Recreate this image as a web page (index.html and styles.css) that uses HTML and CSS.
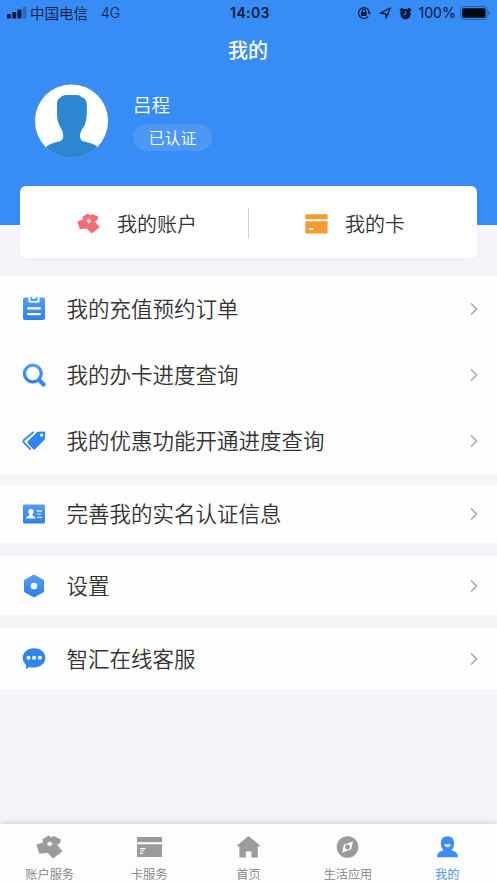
FILE: index.html
```html
<!DOCTYPE html>
<html lang="zh-CN">
<head>
<meta charset="utf-8">
<meta name="viewport" content="width=device-width, initial-scale=1">
<title>我的</title>
<link rel="stylesheet" href="styles.css">
</head>
<body>
<svg class="defs" width="0" height="0" aria-hidden="true">
  <defs>
    <linearGradient id="blue" x1="0" y1="0" x2="0" y2="1"><stop offset="0" stop-color="#559df2"/><stop offset="1" stop-color="#2f80ec"/></linearGradient>
    <symbol id="chevron" viewBox="0 0 8 14"><path d="M1 1.3 6.7 7 1 12.7" fill="none" stroke="#999" stroke-width="1.2"/></symbol>
    <symbol id="blocks" viewBox="0 0 27 24"><path fill="currentColor" fill-rule="evenodd" d="M.4 9.6 7 7.4 6.4 4.2 12.8.5 15.3 2.6 18 1 25 4.4 23.8 8.2 21 9.8 26.6 16.2 17 23.5 11.6 17.8 3.3 18.7ZM13.7 6.2 10.8 8.7 13.7 11.6 16.7 9Z"/></symbol>
  </defs>
</svg>
<div class="app">
  <header class="hero">
    <div class="status">
      <div class="status-left">
        <svg width="20" height="12" viewBox="0 0 20 12"><g fill="#071a3c"><rect y="7" width="4" height="4.6" rx="1"/><rect x="5.3" y="5" width="4" height="6.6" rx="1"/><rect x="10.5" y="2.6" width="4" height="9" rx="1"/></g><rect x="15.7" y="0" width="3.8" height="11.6" rx="1" fill="#2a68bd"/></svg>
        <span class="carrier">中国电信</span><span class="network">4G</span>
      </div>
      <div class="time">14:03</div>
      <div class="status-right">
        <svg width="14" height="14" viewBox="0 0 14 14" fill="none" stroke="#071a3c" stroke-width="1.2"><path d="M11.2 10.4A5.4 5.4 0 1 1 12.3 6.4"/><path d="M10.5 6.2h3.4L12.2 8.7Z" fill="#071a3c" stroke="none"/><path d="M5.2 6.5V5a1.7 1.7 0 0 1 3.4 0v1.5"/><rect x="4.1" y="6.1" width="5.5" height="3.8" rx=".5" fill="#071a3c" stroke="none"/></svg>
        <svg class="locate" width="13" height="12" viewBox="0 0 13 12"><path d="M1.4 6.2 11.4 1 7.1 11 6.6 6.6Z" fill="none" stroke="#071a3c" stroke-width="1.4" stroke-linejoin="round"/></svg>
        <svg class="alarm" width="13" height="13" viewBox="0 0 13 13"><circle cx="6.5" cy="7" r="5.2" fill="#071a3c"/><path d="M1 3.8 3.8 1.2M12 3.8 9.2 1.2" stroke="#071a3c" stroke-width="2"/><path d="M6.7 4v3.4H4.3" fill="none" stroke="#388cf6"/></svg>
        <span class="percent">100%</span>
        <svg width="31" height="14" viewBox="0 0 31 14"><rect x=".6" y=".6" width="26.5" height="12.8" rx="3" fill="none" stroke="#215ba9"/><rect x="2.2" y="2.2" width="23.3" height="9.6" rx="1.5" fill="#020814"/><path d="M28.5 4.8c1.8.8 1.8 3.6 0 4.4Z" fill="#215ba9"/></svg>
      </div>
    </div>
    <h1 class="title">我的</h1>
    <div class="profile">
      <svg class="avatar" width="75" height="76" viewBox="0 0 75 76"><defs><clipPath id="face"><circle cx="37.5" cy="38" r="36.8"/></clipPath></defs><circle cx="37.5" cy="38" r="37" fill="#fff" stroke="#3a81cc" stroke-width=".8"/><path clip-path="url(#face)" fill="#2e86d1" d="M26 15Q28 12.2 33 12H43Q46 12 47.5 14Q52.5 15.5 52.8 21V30Q52.6 38 50.5 42.5Q46.5 48 46 52Q45.8 57 49 58.3C56 60 60 60.5 64 64.5L66 77H9L12 64Q17 60 26 58.3Q29.5 57 29.2 52Q29 48 25.8 43Q23 38 23 31V21Q23 16 26 15Z"/></svg>
      <div class="identity"><div class="name">吕程</div><div class="badge">已认证</div></div>
    </div>
  </header>
  <section class="card">
    <div class="card-item">
      <svg class="red" width="23" height="21" viewBox="0 0 27 24" preserveAspectRatio="none"><use href="#blocks"/></svg><span>我的账户</span>
    </div>
    <div class="divider"></div>
    <div class="card-item">
      <svg width="23" height="20" viewBox="0 0 23 20"><path fill="#f79a32" fill-rule="evenodd" d="M1.5.3h20Q22.6.3 22.6 1.4V5.2H.4V1.4Q.4.3 1.5.3ZM.4 7.2H22.6V18Q22.6 19.6 21 19.6H2Q.4 19.6.4 18ZM4 14V16H8.3V14Z"/></svg><span>我的卡</span>
    </div>
  </section>
  <main>
    <section class="group first">
      <div class="row"><svg class="icon" width="24" height="24" viewBox="0 0 24 24"><path fill="url(#blue)" d="M3 .5H6.5V5.6H17.5V.5H21Q23 .5 23 2.5V21Q23 23 21 23H3Q1 23 1 21V2.5Q1 .5 3 .5Z"/><path fill="#559df2" d="M8.4 0H10.2V1.8H13.8V0H15.6V4H8.4Z"/><path d="M6.2 11.4H17.8M6.2 17.2H17.8" stroke="#fff" stroke-width="2.3" stroke-linecap="round"/></svg><span>我的充值预约订单</span><svg class="chev"><use href="#chevron"/></svg></div>
      <div class="row"><svg class="icon" width="24" height="24" viewBox="0 0 24 24"><circle cx="10.8" cy="10.5" r="8.4" fill="none" stroke="url(#blue)" stroke-width="3.3"/><path d="m17.4 17.2 4.2 4.2" stroke="#3986ea" stroke-width="4.2" stroke-linecap="round"/></svg><span>我的办卡进度查询</span><svg class="chev"><use href="#chevron"/></svg></div>
      <div class="row"><svg class="icon" width="24" height="24" viewBox="0 0 24 24"><path fill="#2f84ef" fill-rule="evenodd" d="M15.4 2.8 22 2.5Q23.4 2.4 23.3 4L22.8 10.5 13.2 20Q12.1 21 11 20L6 14.8Q4.7 13.4 6 12ZM19.6 4.4a1.65 1.65 0 1 0 .01 0Z"/><path d="M11.6 2.9 2 11Q.8 12.2 1.8 13.4L8.7 20.6" fill="none" stroke="#3b8bed" stroke-width="1.9"/></svg><span>我的优惠功能开通进度查询</span><svg class="chev"><use href="#chevron"/></svg></div>
    </section>
    <section class="group verify"><div class="row"><svg class="icon" width="24" height="24" viewBox="0 0 24 24"><rect x="1" y="2.5" width="22" height="19" rx="1.6" fill="url(#blue)"/><path fill="#fff" d="M4 16.5Q4 14.7 7.2 13.3L7.6 12.4Q5.9 10.5 6.3 8.8Q6.8 7 8.9 7Q11.1 7 11.6 8.8Q11.9 10.8 10.3 12.4L10.8 13.4Q13.5 14.7 13.5 16.5Z"/><path d="M14.5 9H19.8M15.2 12.1H18.8M14.8 15.4H20.2" stroke="#d8ebff" stroke-width="1.4"/></svg><span>完善我的实名认证信息</span><svg class="chev"><use href="#chevron"/></svg></div></section>
    <section class="group settings"><div class="row"><svg class="icon" width="24" height="24" viewBox="0 0 24 24"><path fill="url(#blue)" stroke="url(#blue)" stroke-width="2" stroke-linejoin="round" d="M12 1.7 21 6.6V17.4L12 22.3 3 17.4V6.6Z"/><circle cx="12" cy="12" r="3.3" fill="#fff"/></svg><span>设置</span><svg class="chev"><use href="#chevron"/></svg></div></section>
    <section class="group service"><div class="row"><svg class="icon" width="24" height="24" viewBox="0 0 24 24"><path fill="#2f87ee" d="M12 1.2C18.8 1.2 23.4 5.4 23.4 10.8S18.8 20.4 12 20.4Q9.5 20.4 7.4 19.9L4.1 21.9 4 17.9Q.7 15.1.7 10.8C.7 5.4 5.4 1.2 12 1.2Z"/><g fill="#fff"><circle cx="6.5" cy="10.8" r="2"/><circle cx="12.1" cy="10.8" r="2"/><circle cx="17.9" cy="10.8" r="2"/></g></svg><span>智汇在线客服</span><svg class="chev"><use href="#chevron"/></svg></div></section>
  </main>
  <nav class="tabs">
    <div class="tab"><svg width="27" height="24"><use href="#blocks"/></svg><span>账户服务</span></div>
    <div class="tab"><svg width="27" height="24" viewBox="0 0 27 24"><path fill="currentColor" fill-rule="evenodd" d="M1 2H26V7.3H1ZM1 9.2H26V22H1ZM4 13V14.2H9.4V13ZM4 15.4V16.4H8.2V15.4ZM4 17.7V18.9H7V17.7Z"/></svg><span>卡服务</span></div>
    <div class="tab"><svg width="27" height="24" viewBox="0 0 27 24"><path fill="currentColor" d="M13.5 1 26 11.2H22.8V22.5H16.4V16.5H10.8V22.5H4.4V11.2H1.2Z"/></svg><span>首页</span></div>
    <div class="tab"><svg width="27" height="24" viewBox="0 0 27 24"><circle cx="13.5" cy="12" r="10.8" fill="currentColor"/><path fill="#fff" fill-rule="evenodd" d="M18.9 6.6 17.2 14.2 8.1 17.4 9.9 9.8ZM13.5 9.5a2.5 2.5 0 1 0 .01 0Z"/></svg><span>生活应用</span></div>
    <div class="tab active"><svg width="27" height="24" viewBox="0 0 27 24"><path fill="currentColor" d="M3.2 22.3V20Q3.8 17 9.3 15.2Q6.7 12.3 6.7 8.2Q6.9 1.2 13.5 1.2T20.2 8.2Q20.2 12.3 17.6 15.2Q23 17 23.7 20V22.3Z"/><path fill="#fff" d="M10.3 9.2H16.8Q16.2 12 13.6 12T10.3 9.2Z"/></svg><span>我的</span></div>
  </nav>
</div>
</body>
</html>
```
FILE: styles.css
```css
* { box-sizing: border-box; }
body { margin: 0; font-family: "Noto Sans CJK SC", sans-serif; font-weight: 350; color: #333; }
svg { display: block; flex: none; }
.defs { position: absolute; }
.app { height: 883px; display: flex; flex-direction: column; background: #f4f4f9; overflow: hidden; }
.hero { flex: none; height: 225px; background: #388cf6; }
.status { height: 26px; display: grid; grid-template-columns: 1fr auto 1fr; align-items: center; padding: 0 6px 0 9px; color: #071a3c; font-size: 14.5px; line-height: 26px; }
.status-left, .status-right { display: flex; align-items: center; }
.status-left { margin-left: -2px; }
.status-right { justify-content: flex-end; }
.carrier { margin-left: 3px; }
.network { margin-left: 13px; font-family: Inter, sans-serif; font-size: 14px; }
.time { font: 600 14px/26px Inter, sans-serif; letter-spacing: .4px; }
.locate { margin-left: 8px; }
.alarm { margin-left: 7px; }
.percent { margin: 0 4px 0 6px; font: 400 14.2px/26px Inter, sans-serif; }
.title { margin: 9px 1px 0 0; text-align: center; font-size: 20px; font-weight: 500; line-height: 30px; color: #fff; }
.profile { display: flex; margin: 18px 0 0 34px; color: #fff; }
.identity { margin-left: 24px; padding-top: 7px; }
.name { font-size: 18.5px; line-height: 28px; }
.badge { margin-top: 6px; width: 79px; height: 27px; border-radius: 14px; background: #4c98f4; text-align: center; font-size: 16px; line-height: 26px; }
.card { flex: none; height: 72px; margin: -39px 20px 18px; display: grid; grid-template-columns: 228px 1px 1fr; align-items: center; background: #fff; border-radius: 6px; box-shadow: 0 2px 8px rgba(60, 70, 110, .03); font-size: 20px; }
.card-item { display: flex; align-items: center; gap: 17px; padding: 3px 0 0 57px; line-height: 30px; }
.card-item span { margin-top: 1px; }
.red { color: #f76d73; }
.divider { height: 30px; margin-top: 1px; background: #d0d0d2; }
.divider + .card-item { padding-left: 56px; }
.group { background: #fefefe; }
.row { height: 66px; display: flex; align-items: center; padding: 0 19px 0 22px; font-size: 21.5px; line-height: 32px; }
.row span { flex: 1; margin: -2px 0 0 20.5px; }
.icon { width: 24px; height: 24px; }
.chev { width: 8px; height: 14px; }
.first { height: 198px; }
.verify { margin-top: 11px; }
.verify .row { height: 58px; }
.settings { margin-top: 13px; }
.settings .row { height: 59px; }
.service { margin-top: 13px; }
.service .row { height: 61px; }
.tabs { flex: none; height: 59px; margin-top: auto; display: grid; grid-template-columns: repeat(5, 1fr); background: #fdfdfd; box-shadow: 0 -1px 6px rgba(40, 40, 70, .18); }
.tab { display: flex; flex-direction: column; align-items: center; padding-top: 11px; color: #9b9b9b; }
.tab span { margin-top: 6px; font-size: 12.2px; line-height: 19px; color: #808080; }
.tab.active, .tab.active span { color: #3b8df0; }
```
